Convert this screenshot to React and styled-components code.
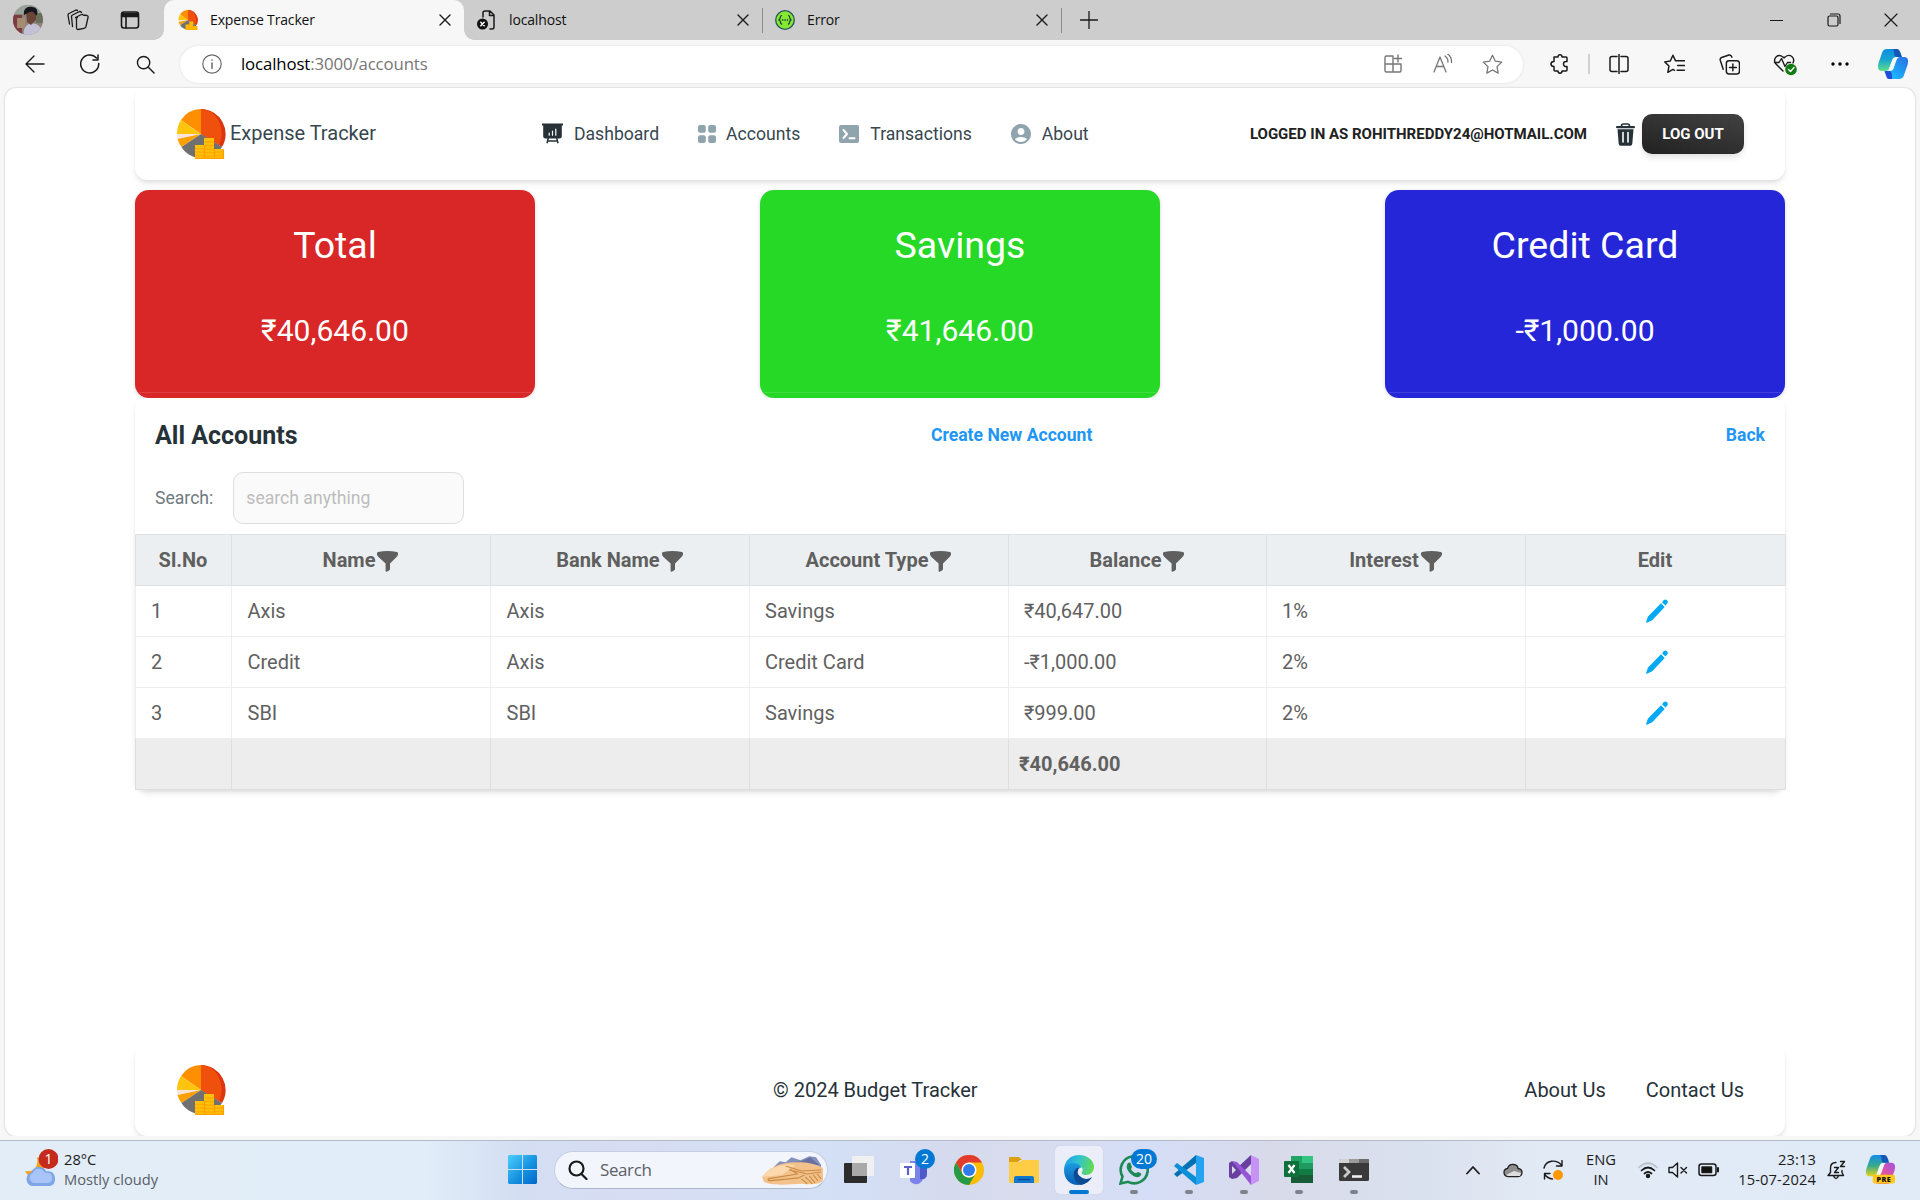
import React from "react";
import styled, { createGlobalStyle, css } from "styled-components";
import { MdAccountCircle } from "react-icons/md";

const UI = `"Open Sans", "Noto Sans", sans-serif`;

const Global = createGlobalStyle`
  *, *::before, *::after { box-sizing: border-box; }
  html, body { margin: 0; padding: 0; }
  body { font-family: Roboto, sans-serif; background: #f7f7f7; overflow: hidden; }
  svg { display: block; flex-shrink: 0; }
`;

const Screen = styled.div`
  width: 1920px; height: 1200px; display: flex; flex-direction: column; overflow: hidden;
`;

/* ---------- browser chrome ---------- */
const TabStrip = styled.div`
  height: 40px; background: #cdcdcd; display: flex; align-items: stretch; font-family: ${UI};
`;
const Slot = styled.div`
  width: ${(p) => p.$w}px; flex: none; display: flex; align-items: center; justify-content: center;
`;
const Spacer = styled.div`flex: 1;`;
const Tab = styled.div`
  width: ${(p) => p.$w}px; flex: none; display: flex; align-items: center; padding: 0 13px 0 ${(p) => p.$pl}px;
  gap: 12px; font-size: 14px; color: #111; position: relative;
  ${(p) => p.$active && css`
    background: #f7f7f7; border-radius: 10px 10px 0 0;
    &::before, &::after {
      content: ""; position: absolute; bottom: 0; width: 10px; height: 10px;
    }
    &::before { left: -10px; background: radial-gradient(circle at 0 0, transparent 9.5px, #f7f7f7 10px); }
    &::after { right: -10px; background: radial-gradient(circle at 100% 0, transparent 9.5px, #f7f7f7 10px); }
  `}
`;
const TabTitle = styled.span`
  flex: 1; letter-spacing: -0.15px; white-space: nowrap; margin-top: -1px;
`;
const TabRule = styled.div`width: 1px; height: 25px; align-self: center; background: #8b8b8b;`;

const Toolbar = styled.div`
  height: 48px; background: #f7f7f7; display: flex; align-items: center; padding-left: 7px; font-family: ${UI};
`;
const AddressBar = styled.div`
  width: 1343px; height: 37px; margin: 0 9px 0 8px; border-radius: 19px; background: #fff; display: flex; align-items: center;
  box-shadow: 0 0 3px rgba(0,0,0,0.1); padding-left: 4px; padding-right: 6px;
`;
const Url = styled.div`
  margin-left: 2px; font-size: 16.8px; letter-spacing: -0.12px; color: #767676; flex: 1; margin-top: -2px;
  b { font-weight: 400; color: #000; }
`;
const ToolRule = styled.div`width: 2px; height: 20px; background: #d0d0d0; margin-left: 1px;`;

const Viewport = styled.main`
  height: 1048px; margin: 0 5px; background: #fff; border-radius: 11px; overflow: hidden;
  box-shadow: 0 0 2px rgba(0,0,0,0.28); padding: 0 130px; display: flex; flex-direction: column; flex: none;
`;
const BottomGap = styled.div`height: 4px; flex: none; background: #f7f7f7;`;

/* ---------- app ---------- */
const cardShadow = "0 4px 6px -1px rgba(0,0,0,0.1), 0 2px 4px -1px rgba(0,0,0,0.06)";
const Header = styled.header`
  height: 92px; flex: none; background: #fff; border-radius: 12px; box-shadow: ${cardShadow};
  display: flex; align-items: center; padding: 0 41px;
`;
const Brand = styled.div`
  width: 366px; display: flex; align-items: center; gap: 4px; font-size: 20px; color: #37474f;
  span { padding-bottom: 2px; }
`;
const Nav = styled.nav`display: flex; align-items: center; gap: 39px;`;
const NavLink = styled.a`
  display: flex; align-items: center; gap: ${(p) => p.$gap}px; font-size: 17.6px; color: #37474f; white-space: nowrap;
  span { padding-bottom: 1px; }
  svg { color: ${(p) => (p.$dark ? "#263238" : "#90a4ae")}; }
`;
const Account = styled.div`
  margin-left: auto; display: flex; align-items: center; color: #212121; font-size: 15px; font-weight: 700;
  svg { color: #263238; margin: 1px 7px 0 29px; }
`;
const LogoutButton = styled.button`
  width: 102px; height: 40px; border: 0; border-radius: 10px; color: #fff; font: 700 15px Roboto, sans-serif;
  background: linear-gradient(15deg, #212121, #424242); box-shadow: 0 4px 6px -1px rgba(33,33,33,0.15); padding: 0;
`;
const Summary = styled.section`
  display: flex; justify-content: space-between; padding-top: 10px; flex: none;
`;
const SummaryCard = styled.article`
  width: 400px; height: 208px; border-radius: 14px; background: ${(p) => p.$bg}; color: #fff; text-align: center;
  box-shadow: 0 1px 4px rgba(0,0,0,0.15); display: flex; flex-direction: column; padding-top: 30px;
  h2 { margin: 0; font-weight: 400; font-size: 37.5px; line-height: 50px; }
  p { margin: 43px 0 0; font-size: 30.1px; line-height: 36px; }
  hr { margin: auto 4px 5px; border: 0; height: 1px; background: rgba(255,255,255,0.12); flex: none; }
`;
const Panel = styled.section`
  background: #fff; border-radius: 12px; box-shadow: ${cardShadow}; flex: none; position: relative;
`;
const PanelHead = styled.div`
  height: 74px; padding: 0 20px; display: flex; align-items: center; justify-content: space-between;
  h1 { margin: 0; font-size: 25px; font-weight: 700; color: #263238; }
  a { font-size: 17.6px; font-weight: 700; color: #2196f3; padding-bottom: 1px; }
`;
const SearchRow = styled.label`
  height: 62px; padding: 0 20px 10px; display: flex; align-items: center; gap: 20px; font-size: 17.6px; color: #6f7a80;
  span { padding-bottom: 1px; }
`;
const SearchInput = styled.input`
  width: 231px; height: 52px; border: 1px solid #dedede; border-radius: 10px; background: #fafafa; padding: 0 12px 1px;
  font: 400 17.6px Roboto, sans-serif; &::placeholder { color: #bdbdbd; opacity: 1; }
`;
const Table = styled.table`
  width: 1650px; table-layout: fixed; border-collapse: collapse; font-size: 20px; color: #616161;
  th, td { height: 51px; padding: 0 15.5px; border: 1px solid #eee; text-align: left; font-weight: 400; }
  td:first-child { padding-left: 15px; }
  td:nth-child(n + 4) { padding-left: 15px; }
  thead th { background: #eceff1; font-weight: 700; text-align: center; color: #5f5f5f; border-color: #dfe1e2; padding: 0; }
  tfoot td { background: #ededed; border-color: #dedede; border-top-color: #ececec; font-weight: 700; }
  tfoot td:nth-child(n) { padding: 0 10px; }
`;
const HeadLabel = styled.div`
  display: flex; align-items: center; justify-content: center; gap: 2px; padding-right: 1px;
  svg { margin-top: 3px; }
`;
const EditButton = styled.div`display: flex; justify-content: center; color: #03a9f4; padding-left: 4px; padding-bottom: 1px;`;
const Footer = styled.footer`
  margin-top: auto; height: 91px; flex: none; background: #fff; border-radius: 12px; box-shadow: ${cardShadow};
  padding: 0 41px 2px; display: flex; align-items: center; font-size: 20px; color: #263238;
`;
const Copyright = styled.div`margin-left: 547px;`;
const FooterLinks = styled.div`margin-left: auto; display: flex; gap: 40px;`;

/* ---------- taskbar ---------- */
const Taskbar = styled.div`
  height: 60px; flex: none; border-top: 1px solid #b3bac8; padding-bottom: 2px; display: flex; align-items: stretch; font-family: ${UI};
  background: linear-gradient(90deg, #e2edf7 0, #e1edf8 22%, #d4def3 27%, #d7ddf2 33%, #d3e0f6 43%, #d6daee 50%, #d8dced 53%, #d5def7 60%, #d8daea 66%, #dae1ee 74%, #e2eaf5 80%, #e0ebf7 100%);
`;
const Weather = styled.div`
  width: 495px; display: flex; align-items: center; padding: 0 0 2px 24px; gap: 6px; font-size: 14.7px; line-height: 20px; color: #1b1b1b;
  p { margin: 0; } p + p { color: #5b6068; }
`;
const TaskSearch = styled.div`
  width: 274px; height: 38px; align-self: center; margin: 0 3px 0 4px; border-radius: 19px; background: #f2f5fc; border: 1px solid #c6cee2; border-bottom-color: #aeb8cd;
  display: flex; align-items: center; padding: 0 2px 0 13px; font-size: 17px; color: #5c5f66; overflow: hidden;
  span { flex: 1; margin-left: 12px; letter-spacing: -0.4px; }
`;
const AppSlot = styled.div`
  width: 55px; display: flex; align-items: center; justify-content: center; position: relative;
`;
const Tile = styled.div`
  width: 48px; height: 48px; border-radius: 5px; display: flex; align-items: center; justify-content: center;
  background: #ebeef8; box-shadow: 0 0 1px #b6bccd;
`;
const Indicator = styled.i`
  position: absolute; bottom: 4px; width: ${(p) => (p.$on ? 20 : 8)}px; height: 4px; border-radius: 2px;
  background: ${(p) => (p.$on ? "#0078d4" : "#7f828b")};
`;
const Badge = styled.b`
  position: absolute; top: 8px; left: ${(p) => p.$x}px; min-width: 20px; height: 20px; padding: 0 5px; border-radius: 10px;
  background: #0078d4; color: #fff; font-size: 14px; font-weight: 400; line-height: 19px; text-align: center;
`;
const TrayText = styled.div`
  width: ${(p) => p.$w}px; align-self: center; text-align: ${(p) => p.$align}; font-size: 14.7px; line-height: 20px; color: #1b1b1b;
  letter-spacing: ${(p) => p.$ls || "0"}; white-space: nowrap; padding-bottom: 1px;
`;

/* ---------- drawings ---------- */
const Line = ({ s = 20, vb = 20, c = "#1a1a1a", w = 1.3, children }) => (
  <svg width={s} height={s} viewBox={`0 0 ${vb} ${vb}`} fill="none" stroke={c} strokeWidth={w} strokeLinecap="round" strokeLinejoin="round">
    {children}
  </svg>
);
const Cross = () => <Line s={12} vb={12} w={1.4}><path d="M1 1l10 10M11 1L1 11" /></Line>;

const BoardIcon = () => (
  <svg width="21" height="22" viewBox="0 0 21 22">
    <path d="M0 .5h21v2h-1.200V13q0 2.500-2.500 2.500H3.700Q1.200 15.500 1.200 13V2.500H0z" fill="currentColor" />
    <path d="M6.300 15L5 20.300M14.700 15L16 20.300M5.500 18h10" stroke="currentColor" strokeWidth="1.500" />
    <path d="M7.200 12.200V10.200M10.500 12.200V8.200M13.800 12.200V6" stroke="#fff" strokeWidth="1.200" strokeLinecap="round" />
  </svg>
);
const GridIcon = () => (
  <svg width="18" height="18" viewBox="0 0 18 18" fill="currentColor">
    <rect width="7.800" height="7.800" rx="2" /><rect x="10.200" width="7.800" height="7.800" rx="2" />
    <rect y="10.200" width="7.800" height="7.800" rx="2" /><rect x="10.200" y="10.200" width="7.800" height="7.800" rx="2" />
  </svg>
);
const PromptIcon = () => (
  <svg width="20" height="18" viewBox="0 0 20 18">
    <rect width="20" height="18" rx="2" fill="currentColor" />
    <path d="M4.500 5l3.500 4-3.500 4M10.500 13.300h5" fill="none" stroke="#fff" strokeWidth="2" strokeLinecap="round" strokeLinejoin="round" />
  </svg>
);
const IconTrim = styled.span`margin: 0 -2px; && { padding: 0; }`;
const PersonIcon = () => <IconTrim><MdAccountCircle size={24} /></IconTrim>;
const TrashIcon = () => (
  <svg width="19" height="23" viewBox="0 0 19 23">
    <path d="M5.500 3.500V3q0-2 2-2h4q2 0 2 2v.5" fill="none" stroke="currentColor" strokeWidth="1.700" />
    <rect y="3" width="19" height="2.200" rx="1" fill="currentColor" />
    <path d="M1.500 6.200h16l-1.200 14.500q-.2 2-2 2H4.700q-1.800 0-2-2z" fill="currentColor" />
    <path d="M7 9.500v9.500M12 9.500v9.500" stroke="#fff" strokeWidth="1.600" strokeLinecap="round" />
  </svg>
);
const FunnelIcon = () => (
  <svg width="21" height="21" viewBox="0 0 21 21" fill="currentColor">
    <path d="M1 1Q10.500-.8 20 1Q21.400 1.500 21 3.500Q20.500 5 19.500 6L13 12.500V18q-.2 1-1 1.500l-2.400 1.300q-1 .3-1-1V12.500L1.500 6Q.5 5 0 3.500Q-.4 1.500 1 1z" />
  </svg>
);
const PencilIcon = () => (
  <svg width="22" height="24" viewBox="0 0 22 24" fill="currentColor">
    <path d="M15 4.200l3.700 3.800L6.200 21.300 .9 23.700q-.9.200-.8-.7L2 17.500z" />
    <path d="M16 3.200l1.800-2q1.600-1.500 3.200 0 1.500 1.700.2 3.400l-1.700 2z" />
  </svg>
);

const PieLogo = ({ s = 50 }) => (
  <svg width={s} height={s} viewBox="0 0 50 50">
    <path d="M25 25L5 11A24.500 24.500 0 0 1 25 0z" fill="#ff8f00" />
    <path d="M25 0A25 25 0 0 1 46 38L25 25z" fill="#dd3510" />
    <path d="M25 0C38 1 45.500 12 45.500 25C45.500 30 44 34 43 36L25 25z" fill="#ef510c" />
    <path d="M25 25H1C1 19 2.500 15 5 11z" fill="#ffc40d" />
    <path d="M25 25L1.500 30Q1 28 1 25z" fill="#fbe4dc" />
    <path d="M25 25L5.500 38Q2.500 34 1.500 30z" fill="#ffa000" />
    <path d="M25 25L46 38C41 46 33 50 25 49C16 49 9 44 5.500 38z" fill="#707070" />
    <path d="M19 36h9v-7h10v11h10v10H19z" fill="#ffc107" />
    <path d="M19 39.500h9M19 43h9M19 46.500h9M29 33h9M29 36.500h9M29 40h9M29 43.500h9M29 47h9M39 43h9M39 46.500h9" stroke="#ffab00" strokeWidth="1.300" />
    <path d="M28.500 36v14M38.500 40v10M47.400 40v10" stroke="#ff9f00" strokeWidth="1.300" />
    <path d="M19 49.400h29" stroke="#ffa000" strokeWidth="1.200" />
  </svg>
);
const Avatar = () => (
  <svg width="30" height="30" viewBox="0 0 30 30">
    <defs><clipPath id="av"><circle cx="15" cy="15" r="15" /></clipPath></defs>
    <g clipPath="url(#av)">
      <rect width="30" height="30" fill="#8d8578" /><rect width="30" height="9" fill="#98a39c" />
      <path d="M0 10h9v20H0z" fill="#7a3c40" /><path d="M4 13h8v10H4z" fill="#a88a70" /><path d="M23 8h7v10h-7z" fill="#69705c" />
      <path d="M11 30c-1-7 2-10 7-12l5 1c4 2 6 5 7 11z" fill="#c4c1d6" />
      <path d="M13 7h10v8l-5 5-4-3z" fill="#6b4437" />
      <path d="M11 10c-1-6 3-9 8-8 5 0 7 5 4 9-1-3-3-5-5-4-3 0-4 2-7 3z" fill="#17161c" />
    </g>
  </svg>
);
const Copilot = ({ s = 30, pre }) => (
  <svg width={s} height={s} viewBox="0 0 30 30">
    <defs>
      <linearGradient id={"ca" + s} x1="0" y1="0" x2="0" y2="1">
        <stop stopColor={pre ? "#168bea" : "#0d8fe0"} /><stop offset=".5" stopColor={pre ? "#35aa8c" : "#1aa6cf"} /><stop offset="1" stopColor={pre ? "#e8d31c" : "#5fe08a"} />
      </linearGradient>
      <linearGradient id={"cb" + s} x1="1" y1="0" x2="0" y2="1">
        <stop stopColor={pre ? "#a050e8" : "#2a6fe0"} /><stop offset=".5" stopColor={pre ? "#e4559c" : "#1d9df5"} /><stop offset="1" stopColor={pre ? "#f58a48" : "#28c3fb"} />
      </linearGradient>
    </defs>
    <path d="M9 0h8c3 0 4 2 5 5l1 3h-4c-3 0-4 1-5 4l-3 8q-1 2-3 2H4C-.5 22-.5 18 .5 14L4 4q1-4 5-4z" fill={`url(#ca${s})`} />
    <path d="M15 0h4c2 0 3 2 4 5l1 3h-5c-2 0-3-2-3-5z" fill="#1358b8" />
    <path d="M21 30h-8c-3 0-4-2-5-5l-1-3h4c3 0 4-1 5-4l3-8q1-2 3-2h4c4.500 0 4.500 4 3.500 8L26 26q-1 4-5 4z" fill={`url(#cb${s})`} />
    {!pre && <path d="M14 30h-3c-2 0-2.500-2-3.500-5l-1-3H11c2 0 3 2 3 5z" fill="#1d4fd8" />}
    <path d="M18.500 8.500h-1.500q-2 0-3 3l-3.500 10h2q2 0 3-3z" fill="#f7f7f7" />
    {pre && <g><rect x="7" y="20.500" width="23" height="9" rx="2" fill="#ffc81a" />
      <text x="18.500" y="28" fontSize="7.500" fontWeight="800" fontFamily="Open Sans, sans-serif" textAnchor="middle" fill="#111" letterSpacing=".4">PRE</text></g>}
  </svg>
);
const WeatherIcon = () => (
  <svg width="34" height="40" viewBox="0 0 34 40">
    <path d="M13 8C15 17 10 24 1 22C4 29 14 31 19 23C22 16 19 11 13 8z" fill="#f3a11f" />
    <path d="M8 37a7 7 0 0 1-.5-13.500C9 17 19 16 22.500 22.500C28 21.500 31 25 31 30s-3 7-6 7z" fill="#7ea5e8" />
    <path d="M8 33a5 5 0 0 1 1-9C10 19 18 18 21 24C27 23 29 27 28 31c-1 3-4 3-6 3H9z" fill="#a9c5f7" />
    <circle cx="24.500" cy="10" r="10" fill="#c42b1c" />
    <text x="24.500" y="15" textAnchor="middle" fill="#fff" fontSize="14" fontFamily="Open Sans, sans-serif">1</text>
  </svg>
);
const StartIcon = () => (
  <svg width="29" height="29" viewBox="0 0 29 29">
    <defs><linearGradient id="win" x1="0" y1="0" x2="1" y2="1"><stop stopColor="#4cd0fd" /><stop offset=".55" stopColor="#1592e0" /><stop offset="1" stopColor="#0068cc" /></linearGradient></defs>
    <path d="M1 0h13v14H0V1zM15 0h13l1 1v13H15zM0 15h14v14H1l-1-1zM15 15h14v13l-1 1H15z" fill="url(#win)" />
  </svg>
);
const HandsIcon = () => (
  <svg width="63" height="30" viewBox="0 0 64 30">
    <path d="M12 12l6-6 6 1 6-5 9 3 9-4 7 1 5 8v5H12z" fill="#8590bd" /><path d="M30 7l10-1 9-4 9 8H28z" fill="#66719f" />
    <path d="M0 22C10 9 24 7 36 7c10 0 20 2 26 6v13c-4 4-12 4-22 3-14 1-32 2-38-2z" fill="#f3c28c" />
    <path d="M0 22C10 10 24 8 34 10L20 20z" fill="#fbd9ad" />
    <path d="M6 24l30-5-8-5M6 24l1 2 30-3 6-3M24 11l16 5 20-1M28 15l18 4 14-2M40 24l6 5M44 22l7 7M48 21l6 7M52 20l5 6M56 19l4 5" stroke="#c98a42" strokeWidth="1.100" fill="none" />
  </svg>
);
const TaskViewIcon = () => (
  <svg width="30" height="30" viewBox="0 0 30 30"><rect x="0" y="8" width="23" height="20" rx="1" fill="#2c2c2c" /><rect x="8" y="1" width="22" height="20" rx="1" fill="#f0f0f0" /><path d="M8 8h15v13H8z" fill="#a9a9a9" /></svg>
);
const TeamsIcon = () => (
  <svg width="28" height="30" viewBox="0 0 28 30"><path d="M10 6h12v12a7 7 0 0 1-12 8z" fill="#7b83eb" /><path d="M20 10h7v9c0 4-3 6-7 5z" fill="#5059c9" /><rect x="0" y="8" width="15" height="15" rx="1" fill="#fff" />
    <path d="M4 12h8M8 12v8" stroke="#5b5fc7" strokeWidth="2.200" /></svg>
);
const ChromeIcon = () => (
  <svg width="30" height="30" viewBox="0 0 30 30"><circle cx="15" cy="15" r="15" fill="#fbbc05" />
    <path d="M2 7.500A15 15 0 0 1 28 7.500H15L8.500 18.700z" fill="#e33b2e" /><path d="M2 7.500L8.500 18.700A7.500 7.500 0 0 0 21.500 18.700L15 30A15 15 0 0 1 2 7.500z" fill="#269a44" />
    <circle cx="15" cy="15" r="7.500" fill="#fff" /><circle cx="15" cy="15" r="6" fill="#2f7ded" /></svg>
);
const FolderIcon = () => (
  <svg width="30" height="28" viewBox="0 0 30 28"><path d="M0 2q0-1 1-1h9l3 3h-2l-2 2H0z" fill="#dca00c" /><path d="M0 6h11l2-2h16q1 0 1 1v21q0 1-1 1H1q-1 0-1-1z" fill="#ffcd45" />
    <path d="M5 27v-5q0-2 2-2h16q2 0 2 2v5z" fill="#1277cd" /><path d="M9 23.500h12" stroke="#0a4a8d" strokeWidth="1.300" /></svg>
);
const EdgeIcon = () => (
  <svg width="30" height="30" viewBox="0 0 30 30">
    <defs><linearGradient id="e1" x1="0" y1=".3" x2="1" y2=".5"><stop stopColor="#1b9ee5" /><stop offset=".45" stopColor="#31c2d3" /><stop offset="1" stopColor="#61dc50" /></linearGradient>
      <linearGradient id="e2" x1="0" y1="0" x2="0" y2="1"><stop stopColor="#1b9de2" /><stop offset="1" stopColor="#0a5cb4" /></linearGradient></defs>
    <path d="M0 14C1 5 7 0 15 0c9 0 15 6 15 12 0 5-4 8-8 8-3 0-5-1-4-3 2-3 0-5-4-6z" fill="url(#e1)" />
    <path d="M0 15C1 10 5 8 9 8c5 0 8 3 8 5-4-1-6 3-5 7 1 4 6 6 11 5-3 4-6 5-9 5C6 30 0 24 0 15z" fill="url(#e2)" />
    <path d="M10 17c-1 5 1 10 7 13 5-1 9-4 11-8-4 3-9 2-11 0-3-2-4-4-3-6 0-2 1-3 2-3-3-1-5 1-6 4z" fill="#0c4a91" />
  </svg>
);
const WhatsAppIcon = () => (
  <svg width="30" height="30" viewBox="0 0 30 30"><path d="M1.500 28.500l2-7A13.500 13.500 0 1 1 9 26.800z" fill="none" stroke="#1d8a55" strokeWidth="2.600" />
    <path d="M8 10c1-3 3-3 4-1l1 3-1 2c1 2 3 4 5 4l2-1c3 1 4 2 3 3-2 3-5 3-9 0-4-3-6-7-5-10z" fill="#1d8a55" /></svg>
);
const CodeIcon = () => (
  <svg width="30" height="30" viewBox="0 0 30 30"><path d="M22 0l-22 19 3 3 19-14z" fill="#0072b3" /><path d="M22 30L0 11l3-3 19 14z" fill="#0a8fd6" /><path d="M22 0l8 3v24l-8 3z" fill="#26a3f0" /></svg>
);
const StudioIcon = () => (
  <svg width="30" height="30" viewBox="0 0 30 30"><path d="M0 8l3-2 6 6 13-12v9L8 23l-5 1-3-2zM3 11v8l4-4z" fillRule="evenodd" fill="#6b3fa0" /><path d="M3 6L22 30v-9L8 7z" fill="#9455d6" /><path d="M22 0l8 4v22l-8 4z" fill="#c792f5" /></svg>
);
const ExcelIcon = () => (
  <svg width="29" height="29" viewBox="0 0 29 29"><path d="M7 1h11v9H7z" fill="#21a366" /><path d="M18 1h11v9H18z" fill="#33c481" /><path d="M7 8h22v6H7z" fill="#1f9a60" /><path d="M7 14h22v7H7z" fill="#107c41" /><path d="M7 20h22v8H7z" fill="#185c37" /><rect y="6" width="15" height="16" rx="1" fill="#0f703b" />
    <path d="M4.500 10l6 8M10.500 10l-6 8" stroke="#fff" strokeWidth="2.200" /></svg>
);
const TerminalIcon = () => (
  <svg width="30" height="24" viewBox="0 0 30 24"><rect y="1" width="30" height="22" rx="1.500" fill="#3a3a3a" /><path d="M0 5V2q0-1 1-1h9v4z" fill="#d2d2d2" /><path d="M10 1h10v4H10z" fill="#9b9b9b" /><path d="M20 1h9q1 0 1 1v3H20z" fill="#6c6c6c" />
    <path d="M5 9l5 5-5 5" fill="none" stroke="#c9c9c9" strokeWidth="2.800" /><path d="M13 18.500h10" stroke="#eee" strokeWidth="2.600" /></svg>
);

const navItems = [
  ["Dashboard", BoardIcon, 11, true],
  ["Accounts", GridIcon, 10],
  ["Transactions", PromptIcon, 11],
  ["About", PersonIcon, 11],
];
const cards = [
  ["Total", "₹40,646.00", "#d92626"],
  ["Savings", "₹41,646.00", "#26d926"],
  ["Credit Card", "-₹1,000.00", "#2626d9"],
];
const columns = [
  ["Sl.No", false, 96],
  ["Name", true, 259],
  ["Bank Name", true, 259],
  ["Account Type", true, 259],
  ["Balance", true, 258],
  ["Interest", true, 259],
  ["Edit", false, 260],
];
const rows = [
  ["1", "Axis", "Axis", "Savings", "₹40,647.00", "1%"],
  ["2", "Credit", "Axis", "Credit Card", "-₹1,000.00", "2%"],
  ["3", "SBI", "SBI", "Savings", "₹999.00", "2%"],
];

function BrowserChrome() {
  return (
    <>
      <TabStrip>
        <Slot $w={56}><Avatar /></Slot>
        <Slot $w={43}><Line s={22} vb={22}><path d="M8.500 8.500l6-3a1 1 0 0 1 1.500.500l4 .5q1.500.500 1 2l-2 9q-.5 1.500-2 1.800l-6 1.200q-1.500 0-1.500-1.500V9.500q0-1 1-1.200z" /><path d="M5.500 17.500L4.500 7.500q0-1 1-1.500l7-3.500q1.500 0 2 1M2.500 15L1 6q0-1 1-1.500L9 1q1 0 1.500.500" /></Line></Slot>
        <Slot $w={61}><Line s={20} w={1.6}><rect x="1.500" y="2" width="17" height="16" rx="2.500" /><path d="M1.500 5h17" strokeWidth="4.500" strokeLinecap="butt" /><path d="M6 7v11" /></Line></Slot>
        <Slot $w={4} />
        <Tab $w={300} $pl={14} $active><PieLogo s={20} /><TabTitle>Expense Tracker</TabTitle><Cross /></Tab>
        <Tab $w={298} $pl={13}>
          <Line s={20} w={1.5}><path d="M6 7V3q0-2 2-2h5l4 4v12q0 2-2 2h-2M12.500 1v4.500H17" /><circle cx="5.500" cy="14" r="5.500" fill="#111" stroke="none" /><path d="M3.800 12.300l3.400 3.400M7.200 12.300l-3.400 3.400" stroke="#fff" /></Line>
          <TabTitle>localhost</TabTitle><Cross />
        </Tab>
        <TabRule />
        <Tab $w={298} $pl={12}>
          <svg width="20" height="20" viewBox="0 0 20 20"><circle cx="10" cy="10" r="9.300" fill="#85ea2d" stroke="#2b5560" strokeWidth="1.300" /><path d="M7 5.500q-1.600 0-1.600 1.600T4 10q1.400.500 1.400 2T7 14.500M13 5.500q1.600 0 1.600 1.600T16 10q-1.400.500-1.400 2T13 14.500" fill="none" stroke="#173647" strokeWidth="1.200" /><path d="M7 10h1.300M9.400 10h1.300M11.800 10h1.300" stroke="#173647" strokeWidth="1.300" /></svg>
          <TabTitle>Error</TabTitle><Cross />
        </Tab>
        <TabRule />
        <Slot $w={53}><Line s={18} vb={18}><path d="M9 .5v17M.5 9h17" /></Line></Slot>
        <Spacer />
        <Slot $w={57}><Line s={13} vb={13} w={1.2}><path d="M0 6.500h13" /></Line></Slot>
        <Slot $w={57}><Line s={14} vb={14} w={1.2}><rect x="1" y="3" width="10" height="10" rx="1.500" /><path d="M3.500 1h7.500q2 0 2 2v7.500" /></Line></Slot>
        <Slot $w={57}><Line s={14} vb={14} w={1.2}><path d="M1 1l12 12M13 1L1 13" /></Line></Slot>
        <Slot $w={1} />
      </TabStrip>
      <Toolbar>
        <Slot $w={55}><Line s={20} w={1.4}><path d="M19 10H1M9 2L1 10l8 8" /></Line></Slot>
        <Slot $w={56}><Line s={20} w={1.5}><path d="M18.700 9.500A9 9 0 1 1 16.500 4M18 1v5h-5" /></Line></Slot>
        <Slot $w={54}><Line s={19} w={1.5}><circle cx="8" cy="8" r="6.500" /><path d="M13 13l6 6" /></Line></Slot>
        <AddressBar>
          <Slot $w={55}><Line s={20} c="#6b6b6b" w={1.2}><circle cx="10" cy="10" r="9.200" /><path d="M10 9v5.500M10 6v.3" strokeWidth="1.500" /></Line></Slot>
          <Url><b>localhost</b>:3000/accounts</Url>
          <Slot $w={50}><Line s={20} c="#767676" w={1.4}><path d="M10 2H3.500Q2 2 2 3.500V10h8zM2 10v6.500Q2 18 3.500 18H10v-8M10 10h8v6.500q0 1.500-1.500 1.500H10M15 1v7M11.500 4.500h7" /></Line></Slot>
          <Slot $w={50}><Line s={20} c="#767676" w={1.3}><path d="M1 18L7 3l6 15M3.200 12.500h7.600M12 2q3 2 3 6M14.500 0q4.500 3 4 8.500" /></Line></Slot>
          <Slot $w={49}><Line s={21} c="#767676" w={1.2}><path d="M10 1.200l2.700 5.700 6.100.8-4.500 4.300 1.100 6.200L10 15.200l-5.400 3 1.100-6.200L1.200 7.700l6.100-.8z" /></Line></Slot>
        </AddressBar>
        <Slot $w={55}><Line s={20} w={1.5}><path d="M4 3h4q0-2.200 2-2.200T12 3h4q1 0 1 1v3.500q-3.500-.3-3.500 2.500t3.500 2.500V16q0 1-1 1h-4q0 2.200-2 2.200T8 17H5q-1 0-1-1v-3.500Q1 12.500 1 10t3-2.500z" /></Line></Slot>
        <ToolRule />
        <Slot $w={57}><Line s={20} w={1.5}><path d="M8 2.500H3q-2 0-2 2v11q0 2 2 2h5M12 2.500h5q2 0 2 2v11q0 2-2 2h-5M10 .5v19" /></Line></Slot>
        <Slot $w={55}><Line s={21} w={1.4}><path d="M11 6.500H19.500M13 11h6.500M12.500 15.500h7M11 6.500L8.500 1.200 6 6.700l-5.300.8 4 4-1 6 4.800-2.800 1.500.8" /></Line></Slot>
        <Slot $w={55}><Line s={21} w={1.4}><rect x="7" y="6.500" width="12.500" height="12.500" rx="2.500" /><path d="M13.200 9.500v6.500M10 12.800h6.500M4 14.500L1.200 6q-.5-2 1.300-2.700l7-2.300q2-.5 2.800 2" /></Line></Slot>
        <Slot $w={56}><Line s={24} vb={24} w={1.4}><path d="M10 19L2.500 11.500C-.5 6 5 1 10 5l1 1 1-1c5-4 10.500.5 8 6M1.500 10.500H6l2.500-4 3.500 8 2.500-4h3" /><circle cx="18" cy="17.500" r="5.800" fill="#107c10" stroke="none" /><path d="M15.500 17.500l2 2 3.500-4" stroke="#fff" /></Line></Slot>
        <Slot $w={53}><svg width="18" height="4"><circle cx="2" cy="2" r="1.700" /><circle cx="9" cy="2" r="1.700" /><circle cx="16" cy="2" r="1.700" /></svg></Slot>
        <Slot $w={54}><Copilot s={30} /></Slot>
      </Toolbar>
    </>
  );
}

function WindowsTaskbar() {
  return (
    <Taskbar>
      <Weather><WeatherIcon /><div><p>28°C</p><p>Mostly cloudy</p></div></Weather>
      <AppSlot><StartIcon /></AppSlot>
      <TaskSearch>
        <Line s={20} w={2.2}><circle cx="8.500" cy="8.500" r="7" /><path d="M13.500 14l5 5" /></Line>
        <span>Search</span><HandsIcon />
      </TaskSearch>
      <AppSlot><TaskViewIcon /></AppSlot>
      <AppSlot><TeamsIcon /><Badge $x={29}>2</Badge></AppSlot>
      <AppSlot><ChromeIcon /></AppSlot>
      <AppSlot><FolderIcon /></AppSlot>
      <AppSlot><Tile><EdgeIcon /></Tile><Indicator $on /></AppSlot>
      <AppSlot><WhatsAppIcon /><Badge $x={25}>20</Badge><Indicator /></AppSlot>
      <AppSlot><CodeIcon /><Indicator /></AppSlot>
      <AppSlot><StudioIcon /><Indicator /></AppSlot>
      <AppSlot><ExcelIcon /><Indicator /></AppSlot>
      <AppSlot><TerminalIcon /><Indicator /></AppSlot>
      <Spacer />
      <Slot $w={38}><Line s={14} vb={14} w={1.8}><path d="M1 10.500l6-6.500 6 6.500" /></Line></Slot>
      <Slot $w={42}><Line s={20} w={1.3} c="#222"><path d="M5 16.500q-4-.5-4-4t3.500-4Q6 4 10.500 4.500T15 8.500q4 .5 4 4t-4 4z" fill="#8e8e8e" /><path d="M3 15l8-4 7 2-1 3H5z" fill="#ddd" stroke="none" /></Line></Slot>
      <Slot $w={38}><Line s={20} w={1.4}><path d="M1 8C3 0 13-1 18.500 5M19 .5V6h-5.500M1.500 19v-5.500H7M1.500 14q3 4.500 8 5" /><circle cx="15" cy="15" r="5" fill="#ff9800" stroke="none" /></Line></Slot>
      <TrayText $w={58} $align="center">ENG<br />IN</TrayText>
      <Slot $w={36}><Line s={20} w={1.7}><path d="M1 7.500Q10-1 19 7.500" stroke="#b8c1cc" /><path d="M3.500 10.500q6.500-6 13 0M6.500 13.500q3.500-3 7 0" /><circle cx="10" cy="16" r="1.400" fill="#111" /></Line></Slot>
      <Slot $w={24}><Line s={20} w={1.4}><path d="M1 7.500h3.500L9.500 3v14l-5-4.500H1zM13 7.500l5.500 5.500M18.500 7.500L13 13" /></Line></Slot>
      <Slot $w={36}><Line s={21} vb={21} w={1.5}><rect x="1" y="5" width="17" height="11.500" rx="2.500" /><rect x="4" y="8" width="9.500" height="5.500" fill="#111" /><path d="M20 9v3.500" strokeWidth="2" /></Line></Slot>
      <TrayText $w={90} $align="right" $ls="0.12px">23:13<br />15-07-2024</TrayText>
      <Slot $w={40}><Line s={20} w={1.4}><path d="M10 2.500C6 2.500 4.500 5 4.500 8v4.500L2 15.500h15.500l-1.500-3v-2M7.500 16q2.500 5 5 0M8.500 7.500h4l-4 5h4M14.500 1.500h4l-4 5h4" /></Line></Slot>
      <Slot $w={49}><Copilot s={29} pre /></Slot>
      <Slot $w={15} />
    </Taskbar>
  );
}

export default function App() {
  return (
    <Screen>
      <Global />
      <BrowserChrome />
      <Viewport>
        <Header>
          <Brand><PieLogo /><span>Expense Tracker</span></Brand>
          <Nav>
            {navItems.map(([label, Icon, gap, dark]) => (
              <NavLink key={label} $dark={dark} $gap={gap}><Icon /><span>{label}</span></NavLink>
            ))}
          </Nav>
          <Account>
            <span>LOGGED IN AS ROHITHREDDY24@HOTMAIL.COM</span>
            <TrashIcon />
            <LogoutButton>LOG OUT</LogoutButton>
          </Account>
        </Header>
        <Summary>
          {cards.map(([name, value, bg]) => (
            <SummaryCard key={name} $bg={bg}><h2>{name}</h2><p>{value}</p><hr /></SummaryCard>
          ))}
        </Summary>
        <Panel>
          <PanelHead><h1>All Accounts</h1><a>Create New Account</a><a>Back</a></PanelHead>
          <SearchRow><span>Search:</span><SearchInput placeholder="search anything" /></SearchRow>
          <Table>
            <colgroup>{columns.map(([c, , w]) => <col key={c} width={w} />)}</colgroup>
            <thead><tr>{columns.map(([c, f]) => <th key={c}><HeadLabel>{c}{f && <FunnelIcon />}</HeadLabel></th>)}</tr></thead>
            <tbody>
              {rows.map((r) => (
                <tr key={r[0]}>{r.map((v, i) => <td key={i}>{v}</td>)}<td><EditButton><PencilIcon /></EditButton></td></tr>
              ))}
            </tbody>
            <tfoot><tr>{columns.map(([c]) => <td key={c}>{c === "Balance" ? "₹40,646.00" : ""}</td>)}</tr></tfoot>
          </Table>
        </Panel>
        <Footer>
          <PieLogo />
          <Copyright>© 2024 Budget Tracker</Copyright>
          <FooterLinks><a>About Us</a><a>Contact Us</a></FooterLinks>
        </Footer>
      </Viewport>
      <BottomGap />
      <WindowsTaskbar />
    </Screen>
  );
}
